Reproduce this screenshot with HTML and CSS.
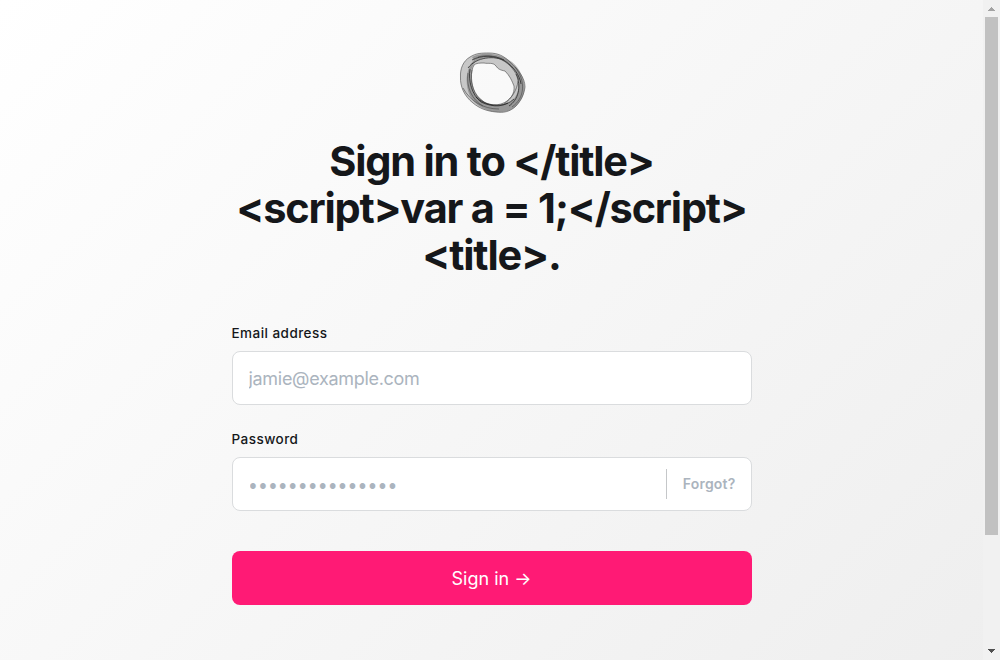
FILE: index.html
```html
<!DOCTYPE html>
<html lang="en">
<head>
<meta charset="utf-8">
<title>Sign in</title>
<link rel="stylesheet" href="styles.css">
</head>
<body>
<div class="window">
  <main class="page">
    <svg class="logo" viewBox="0 0 86 80" width="86" height="80" fill="none" aria-hidden="true">
      <path fill="#777" fill-opacity=".38" fill-rule="evenodd" stroke="#444" stroke-width=".6" d="M39 11C48 11 54 14 60 20C68 27 75 36 75 45C74 53 71 58 66 64C60 70 53 71 46 70C36 69 29 66 23 61C14 54 10 44 10.500 35C10 27 13 19 20 15C26 11 32 11 39 11ZM24 23C20 30 21 42 25 51C30 60 41 65 51 62C60 59 65 52 64 44C62 39 60 34 55 29C50 28 48 27 46 24C43 20 38 22 34 21C30 21 26 21 24 23Z"/>
      <path fill="#555" fill-opacity=".42" fill-rule="evenodd" d="M22 15C34 9 51 12 62 20C72 28 77 43 73 54C69 65 59 71 46 70C35 69 25 63 20 54C15 43 15 28 24 18ZM26 19C19 26 19 42 25 52C33 63 48 67 59 61C69 55 71 42 66 31C57 17 40 11 26 19Z"/>
      <path stroke="#222" stroke-width="1" stroke-opacity=".75" d="M18 26C26 15 45 13 55 19C64 25 70 34 71 42M20 27C18 39 22 53 31 60C44 66 55 65 64 57M66 32C72 45 68 58 59 64M26 55C35 64 49 65 58 61M22 18C31 13 45 13 54 18"/>
      <path stroke="#444" stroke-width=".6" d="M22 28C19 41 24 53 34 60M18 31C16 45 22 58 33 64M13 46C20 59 33 67 49 67M65 25C76 39 75 56 62 65M28 15C45 10 62 20 69 38M68 39C67 48 62 56 54 62"/>
    </svg>
    <h1 class="title">Sign in to &lt;/title&gt;<br>&lt;script&gt;var a = 1;&lt;/script&gt;<br>&lt;title&gt;.</h1>
    <form class="form">
      <label class="label" for="email">Email address</label>
      <div class="field"><input class="input" id="email" type="email" placeholder="jamie@example.com"></div>
      <label class="label" for="password">Password</label>
      <div class="field">
        <input class="input input-password" id="password" type="password" placeholder="●●●●●●●●●●●●●●●">
        <a class="forgot">Forgot?</a>
      </div>
      <button class="submit" type="button">Sign in →</button>
    </form>
  </main>
  <div class="scrollbar">
    <svg class="arrow" width="17" height="17" shape-rendering="crispEdges"><path fill="#a3a3a3" d="M8 7h1v1h1v1h1v1h1v1H5v-1h1V9h1V8h1z"/></svg>
    <div class="thumb"></div>
    <svg class="arrow arrow-down" width="17" height="17" shape-rendering="crispEdges"><path fill="#505050" d="M5 6h7v1h-1v1h-1v1H9v1H8V9H7V8H6V7H5z"/></svg>
  </div>
</div>
</body>
</html>
```
FILE: styles.css
```css
* { box-sizing: border-box; }
body {
  margin: 0;
  overflow: hidden;
  font-family: Inter, sans-serif;
  color: #15171a;
}
.window {
  display: flex;
  height: 660px;
  overflow: hidden;
}
.page {
  width: 983px;
  height: 797px;
  padding-top: 42px;
  display: flex;
  flex-direction: column;
  align-items: center;
  background: linear-gradient(135deg, #fff 0%, #ededed 100%);
}
.logo { display: block; margin-left: 2px; }
.title {
  margin: 16px 0 0;
  font-size: 41.5px;
  line-height: 47px;
  font-weight: 700;
  letter-spacing: -1.2px;
  text-align: center;
}
.form {
  width: 520px;
  margin-top: 45px;
  display: flex;
  flex-direction: column;
}
.label {
  height: 18px;
  margin-bottom: 9px;
  font-size: 13.5px;
  line-height: 18px;
  font-weight: 500;
  letter-spacing: 0.46px;
}
.field {
  height: 54px;
  margin-bottom: 25px;
  display: flex;
  align-items: center;
  background: #fff;
  border: 1px solid #dadcde;
  border-radius: 8px;
}
.input {
  flex: 1;
  min-width: 0;
  height: 52px;
  padding: 0 16px;
  border: 0;
  outline: 0;
  background: transparent;
  font: 400 18px Inter, sans-serif;
  letter-spacing: -0.3px;
}
.input::placeholder { color: #abb4be; opacity: 1; }
.input-password {
  padding: 4px 16px 0 17px;
  font-size: 7.5px;
  letter-spacing: 3.1px;
}
.forgot {
  height: 30px;
  padding: 0 15px 0 16px;
  border-left: 1px solid #c5c7c9;
  font-size: 14px;
  line-height: 30px;
  font-weight: 600;
  letter-spacing: 0.18px;
  color: #abb4be;
}
.submit {
  height: 54px;
  margin-top: 15px;
  padding: 0;
  border: 0;
  border-radius: 8px;
  background: #ff1a75;
  color: #fff;
  font: 400 18px Inter, sans-serif;
}
.scrollbar {
  width: 17px;
  height: 660px;
  display: flex;
  flex-direction: column;
  align-items: center;
  background: #f1f1f1;
}
.arrow { display: block; }
.arrow-down { margin-top: auto; }
.thumb { width: 13px; height: 518px; background: #c1c1c1; }
```
